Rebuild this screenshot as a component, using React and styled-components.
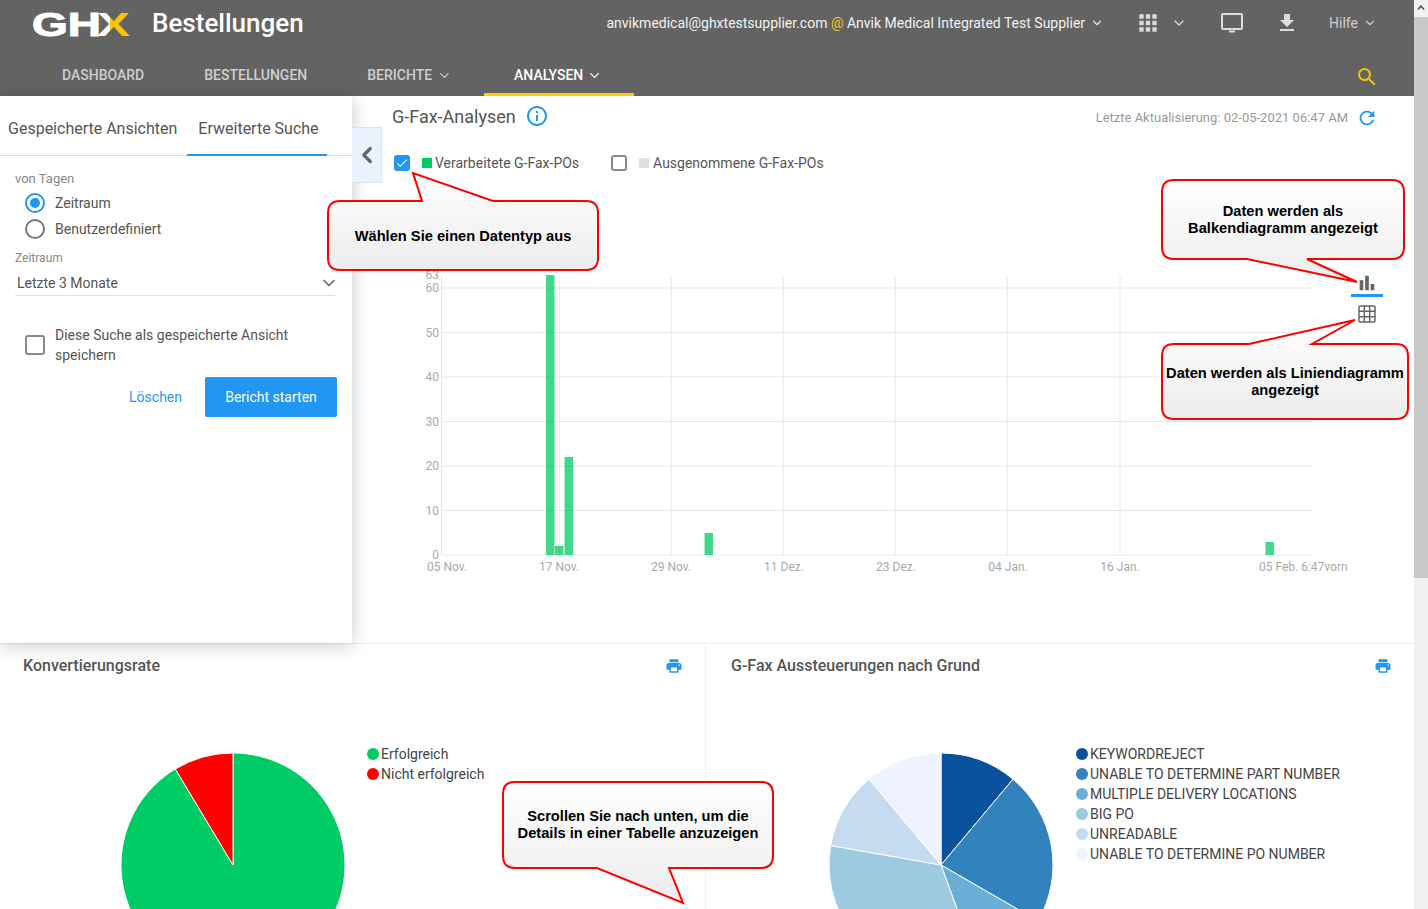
import React from "react";
import styled, { createGlobalStyle } from "styled-components";
import { ChevronDown, ChevronLeft } from "lucide-react";
import { MdApps, MdBarChart, MdFileDownload, MdInfoOutline, MdPrint, MdRefresh, MdSearch, MdCheck } from "react-icons/md";

const Global = createGlobalStyle`
  html, body { margin: 0; padding: 0; height: 909px; overflow: hidden; background: #fff; }
  body { font-family: Roboto, "Liberation Sans", sans-serif; color: #444; }
  * { box-sizing: border-box; }
`;

const Page = styled.div`
  position: relative;
  display: flex;
  width: 1428px;
  height: 909px;
  overflow: hidden;
`;
const Main = styled.div`
  width: 1414px;
  display: flex;
  flex-direction: column;
  flex: none;
`;
const Scrollbar = styled.div`
  width: 14px;
  background: #f1f1f1;
  display: flex;
  flex-direction: column;
  align-items: stretch;
`;
const ScrollArrow = styled.div`
  height: 17px;
  display: flex;
  justify-content: center;
  padding-top: 5px;
`;
const ScrollThumb = styled.div`
  height: 561px;
  background: #c9c9c9;
`;

const Header = styled.header`
  background: #636363;
  height: 96px;
  flex: none;
`;
const TopRow = styled.div`
  height: 47px;
  display: flex;
  align-items: center;
  padding-left: 32px;
`;
const Logo = styled.svg`
  width: 100px;
  height: 44px;
  flex: none;
`;
const AppTitle = styled.div`
  margin: 0 0 2px 20px;
  font-size: 26px;
  font-weight: 500;
  color: #fff;
`;
const UserBlock = styled.div`
  margin: 0 0 2px auto;
  display: flex;
  align-items: center;
  font-size: 14px;
  color: #f2f2f2;
  white-space: pre;
`;
const At = styled.span`
  color: #f5c518;
`;
const Chev = styled(ChevronDown)`
  flex: none;
  color: ${p => p.$c || "#e8e8e8"};
  margin-left: ${p => p.$ml || 0}px;
  margin-right: ${p => p.$mr || 0}px;
`;
const IconBtn = styled.span`
  display: inline-flex;
  color: #dcdcdc;
  margin-left: ${p => p.$ml}px;
`;
const Help = styled.span`
  margin-left: 30px;
  font-size: 14px;
  color: #cfcfcf;
`;
const TopIcons = styled.div`
  display: flex;
  align-items: center;
  margin: 0 37px 2px 0;
`;
const NavRow = styled.nav`
  height: 49px;
  display: flex;
  align-items: stretch;
  padding: 0 35px 0 32px;
`;
const NavItem = styled.div`
  display: flex;
  align-items: center;
  padding: 10px 30px 0;
  font-size: 14px;
  font-weight: 500;
  color: ${p => (p.$active ? "#fff" : "#cfcfcf")};
  border-bottom: 3px solid ${p => (p.$active ? "#fdcf00" : "transparent")};
`;
const NavSearch = styled.div`
  margin-left: auto;
  display: flex;
  align-items: center;
  padding-top: 10px;
  color: #f7c600;
`;

const Upper = styled.div`
  height: 547px;
  display: flex;
  flex: none;
`;
const Sidebar = styled.aside`
  position: relative;
  z-index: 2;
  width: 352px;
  flex: none;
  background: #fff;
  box-shadow: 0 2px 18px rgba(0, 0, 0, 0.22);
`;
const Collapse = styled.div`
  position: absolute;
  left: 352px;
  top: 31px;
  width: 30px;
  height: 56px;
  background: #e9f3fd;
  border: 1px solid #dfe3e6;
  border-left: none;
  display: flex;
  align-items: center;
  justify-content: center;
  color: #666;
`;
const Tabs = styled.div`
  height: 60px;
  border-bottom: 1px solid #ddd;
  display: flex;
  padding-left: 8px;
`;
const Tab = styled.div`
  height: 60px;
  display: flex;
  align-items: center;
  font-size: 16px;
  color: #555;
  padding: ${p => (p.$active ? "6px 8px 0 11px" : "4px 10px 0 0")};
  border-bottom: ${p => (p.$active ? "2px solid #2196f3" : "none")};
`;
const SideBody = styled.div`
  padding: 15px 15px 0;
  display: flex;
  flex-direction: column;
`;
const SmallLabel = styled.div`
  font-size: ${p => p.$s}px;
  color: #888;
  line-height: 16px;
  margin: ${p => p.$mt || 0}px 0 ${p => p.$mb || 0}px;
`;
const RadioRow = styled.div`
  display: flex;
  align-items: center;
  height: 26px;
  padding-left: 10px;
  font-size: 14px;
  color: #555;
  gap: 10px;
`;
const Radio = styled.span`
  width: 20px;
  height: 20px;
  border-radius: 50%;
  flex: none;
  border: 2px solid ${p => (p.$on ? "#2196f3" : "#777")};
  display: flex;
  align-items: center;
  justify-content: center;
  &::after {
    content: "";
    width: 10px;
    height: 10px;
    border-radius: 50%;
    background: ${p => (p.$on ? "#2196f3" : "transparent")};
  }
`;
const SelectBox = styled.div`
  height: 30px;
  margin-right: 2px;
  border-bottom: 1px solid #ddd;
  display: flex;
  align-items: center;
  justify-content: space-between;
  padding: 5px 0 0 2px;
  font-size: 14px;
  color: #555;
`;
const SaveRow = styled.div`
  display: flex;
  align-items: center;
  gap: 10px;
  padding-left: 10px;
  margin-top: 29px;
  font-size: 14px;
  line-height: 20px;
  color: #555;
`;
const Box = styled.span`
  flex: none;
  width: ${p => p.$s}px;
  height: ${p => p.$s}px;
  border-radius: 3px;
  border: 2px solid #8a8a8a;
`;
const Actions = styled.div`
  display: flex;
  justify-content: flex-end;
  align-items: center;
  gap: 23px;
  margin-top: 12px;
`;
const LinkBtn = styled.span`
  font-size: 14px;
  color: #2f96ee;
`;
const PrimaryBtn = styled.span`
  width: 132px;
  height: 40px;
  border-radius: 2px;
  background: #2196f3;
  color: #fff;
  font-size: 14px;
  display: flex;
  align-items: center;
  justify-content: center;
`;

const Analysis = styled.section`
  flex: 1;
  padding: 0 38px 0 40px;
  display: flex;
  flex-direction: column;
`;
const TitleRow = styled.div`
  height: 40px;
  display: flex;
  align-items: center;
`;
const Title = styled.h1`
  margin: 0 9px 0 0;
  font-size: 18px;
  font-weight: 400;
  color: #555;
`;
const Info = styled(MdInfoOutline)`
  color: #2196f3;
`;
const Updated = styled.div`
  margin: 3px 5px 0 auto;
  font-size: 13px;
  color: #999;
  display: flex;
  align-items: center;
  gap: 8px;
`;
const RefreshIcon = styled(MdRefresh)`
  color: #2196f3;
`;
const LegendRow = styled.div`
  margin-top: 15px;
  height: 24px;
  display: flex;
  align-items: center;
  padding-left: 2px;
  font-size: 14px;
  color: #555;
`;
const CheckedBox = styled.span`
  width: 16px;
  height: 16px;
  border-radius: 3px;
  background: #2196f3;
  color: #fff;
  display: flex;
  align-items: center;
  justify-content: center;
  flex: none;
`;
const Swatch = styled.span`
  width: 10px;
  height: 10px;
  background: ${p => p.$c};
  margin: 0 ${p => p.$gap}px 0 12px;
  flex: none;
`;
const SeriesGap = styled.span`
  width: 32px;
  flex: none;
`;
const ChartRow = styled.div`
  display: flex;
  margin-top: 87px;
`;
const ChartSvg = styled.svg`
  width: 959px;
  height: 318px;
  flex: none;
`;
const ViewSwitch = styled.div`
  width: 32px;
  margin-top: 10px;
  display: flex;
  flex-direction: column;
  align-items: center;
  color: #666;
`;
const BarBtn = styled.div`
  width: 32px;
  height: 25px;
  border-bottom: 3px solid #2196f3;
  display: flex;
  justify-content: center;
`;
const TableBtn = styled.svg`
  margin-top: 8px;
`;

const Lower = styled.div`
  flex: 1;
  display: flex;
  border-top: 1px solid #eee;
  min-height: 0;
`;
const Panel = styled.section`
  flex: ${p => p.$w}px 0 0;
  border-left: ${p => (p.$div ? "1px solid #eee" : "none")};
  padding: 12px 22px 0 ${p => p.$pl}px;
  display: flex;
  flex-direction: column;
  min-width: 0;
`;
const PanelHead = styled.div`
  display: flex;
  align-items: center;
  justify-content: space-between;
  height: 20px;
`;
const PanelTitle = styled.h2`
  margin: 0;
  font-size: 16px;
  font-weight: 500;
  color: #555;
`;
const PrintIcon = styled(MdPrint)`
  color: #2196f3;
`;
const PanelBody = styled.div`
  display: flex;
  align-items: flex-start;
  padding: 77px 0 0 ${p => p.$pl}px;
`;
const PieSvg = styled.svg`
  width: 226px;
  height: 226px;
  flex: none;
`;
const PieLegend = styled.ul`
  list-style: none;
  margin: -8px 0 0 ${p => p.$ml}px;
  padding: 0;
`;
const PieLegendItem = styled.li`
  display: flex;
  align-items: center;
  height: 20px;
  font-size: 14px;
  color: #444;
  gap: 2px;
  white-space: nowrap;
`;
const Dot = styled.span`
  width: 12px;
  height: 12px;
  border-radius: 50%;
  background: ${p => p.$c};
  flex: none;
`;

const CalloutWrap = styled.div`
  position: absolute;
  z-index: 5;
  left: ${p => p.$x}px;
  top: ${p => p.$y}px;
  width: ${p => p.$w}px;
  height: ${p => p.$h}px;
  padding-top: ${p => p.$dy || 0}px;
  display: flex;
  align-items: center;
  justify-content: center;
  text-align: center;
  font-family: "Liberation Sans", Arial, sans-serif;
  font-size: 14.67px;
  line-height: 17px;
  font-weight: 700;
  color: #000;
`;
const CalloutShape = styled.svg`
  position: absolute;
  left: 0;
  top: 0;
  overflow: visible;
  pointer-events: none;
`;
const CalloutText = styled.div`
  position: relative;
  white-space: pre-line;
`;

function Callout({ x, y, w, h, tail, side, id, dy, children }) {
  const r = 12;
  const [a, tip, b] = tail;
  const tx = (p) => p[0] - x;
  const ty = (p) => p[1] - y;
  const top = side === "top"
    ? `L${tx(a)} 0 L${tx(tip)} ${ty(tip)} L${tx(b)} 0 `
    : "";
  const bottom = side === "bottom"
    ? `L${tx(b)} ${h} L${tx(tip)} ${ty(tip)} L${tx(a)} ${h} `
    : "";
  const d = `M${r} 0 ${top}L${w - r} 0 Q${w} 0 ${w} ${r} L${w} ${h - r} Q${w} ${h} ${w - r} ${h} ${bottom}L${r} ${h} Q0 ${h} 0 ${h - r} L0 ${r} Q0 0 ${r} 0 Z`;
  return (
    <CalloutWrap $x={x} $y={y} $w={w} $h={h} $dy={dy}>
      <CalloutShape width={w} height={h}>
        <defs>
          <linearGradient id={id} x1="0" y1="0" x2="0" y2="1">
            <stop offset="0" stopColor="#ffffff" />
            <stop offset="1" stopColor="#ececec" />
          </linearGradient>
        </defs>
        <path d={d} fill={`url(#${id})`} stroke="#f00" strokeWidth="2" strokeLinejoin="miter" />
      </CalloutShape>
      <CalloutText>{children}</CalloutText>
    </CalloutWrap>
  );
}

function slice(cx, cy, r, from, to) {
  const pt = (deg) => {
    const t = ((deg - 90) * Math.PI) / 180;
    return [cx + r * Math.cos(t), cy + r * Math.sin(t)];
  };
  const [x1, y1] = pt(from);
  const [x2, y2] = pt(to);
  return `M${cx} ${cy} L${x1} ${y1} A${r} ${r} 0 ${to - from > 180 ? 1 : 0} 1 ${x2} ${y2} Z`;
}

function Pie({ slices }) {
  return (
    <PieSvg viewBox="0 0 226 226">
      {slices.map((s) => (
        <path key={s.c} d={slice(113, 113, 112, s.from, s.to)} fill={s.c} stroke="#fff" strokeWidth="1" />
      ))}
    </PieSvg>
  );
}

const yTicks = [[60, 288], [50, 332.5], [40, 377], [30, 421.5], [20, 466], [10, 510.5], [0, 555]];
const xTicks = [["05 Nov.", 447, 447], ["17 Nov.", 559, 559], ["29 Nov.", 671, 671], ["11 Dez.", 783, 784], ["23 Dez.", 895, 896], ["04 Jan.", 1007, 1008], ["16 Jan.", 1120, 1120]];
const bars = [[546, 275, 8.5], [555, 546, 8.5], [564.5, 457, 8.5], [704.5, 533, 8.5], [1265.5, 542, 8.5]];

function Chart() {
  return (
    <ChartSvg viewBox="392 262 959 318" fontFamily="Roboto, sans-serif" fontSize="12" fill="#a9a9a9">
      <line x1="441.5" y1="275" x2="441.5" y2="555" stroke="#e6e6e6" />
      {xTicks.slice(1).map(([t, x]) => (
        <line key={t} x1={x} y1="275" x2={x} y2="555" stroke="#e6e6e6" />
      ))}
      {yTicks.map(([v, y]) => (
        <line key={v} x1="441" y1={y} x2="1312" y2={y} stroke="#e6e6e6" />
      ))}
      {bars.map(([x, y, w]) => (
        <rect key={x} x={x} y={y} width={w} height={555 - y} fill="#00cc66" fillOpacity="0.75" />
      ))}
      <text x="439" y="279" textAnchor="end">63</text>
      {yTicks.map(([v, y]) => (
        <text key={v} x="439" y={y + 4} textAnchor="end">{v}</text>
      ))}
      {xTicks.map(([t, , lx]) => (
        <text key={t} x={lx} y="571" textAnchor="middle">{t}</text>
      ))}
      <text x="1259" y="571">05 Feb. 6:47vorn</text>
    </ChartSvg>
  );
}

const conv = [
  { c: "#00cc66", from: 0, to: 329 },
  { c: "#ff0000", from: 329, to: 360 },
];
const reasons = [
  { c: "#08519c", from: 0, to: 40, label: "KEYWORDREJECT" },
  { c: "#3182bd", from: 40, to: 120, label: "UNABLE TO DETERMINE PART NUMBER" },
  { c: "#6baed6", from: 120, to: 160, label: "MULTIPLE DELIVERY LOCATIONS" },
  { c: "#9ecae1", from: 160, to: 280, label: "BIG PO" },
  { c: "#c6dbef", from: 280, to: 320, label: "UNREADABLE" },
  { c: "#eff3ff", from: 320, to: 360, label: "UNABLE TO DETERMINE PO NUMBER" },
];

export default function App() {
  return (
    <Page>
      <Global />
      <Main>
        <Header>
          <TopRow>
            <Logo viewBox="0 0 100 44">
              <defs>
                <linearGradient id="gx" x1="0" y1="0" x2="1" y2="0">
                  <stop offset="0.38" stopColor="#fff" />
                  <stop offset="0.38" stopColor="#f7c600" />
                </linearGradient>
              </defs>
              <text x="0" y="34" fontFamily="Liberation Sans, sans-serif" fontWeight="700" fontSize="34" fill="#fff" stroke="#fff" strokeWidth="1" textLength="69" lengthAdjust="spacingAndGlyphs">GH</text>
              <text x="65" y="34" fontFamily="Liberation Sans, sans-serif" fontWeight="700" fontSize="34" fill="url(#gx)" textLength="33" lengthAdjust="spacingAndGlyphs">X</text>
            </Logo>
            <AppTitle>Bestellungen</AppTitle>
            <UserBlock>
              anvikmedical@ghxtestsupplier.com <At>@</At> Anvik Medical Integrated Test Supplier
              <Chev size={14} $ml={5} />
            </UserBlock>
            <TopIcons>
              <IconBtn $ml={31}><MdApps size={26} /></IconBtn>
              <Chev size={16} $ml={10} $c="#dcdcdc" />
              <IconBtn $ml={32}>
                <svg width="26" height="24" viewBox="0 0 26 24" fill="none" stroke="#dcdcdc" strokeWidth="2">
                  <rect x="3" y="3" width="20" height="15" rx="1" />
                  <path d="M10 20.5h6" />
                </svg>
              </IconBtn>
              <IconBtn $ml={30}><MdFileDownload size={24} /></IconBtn>
              <Help>Hilfe</Help>
              <Chev size={14} $ml={5} $c="#cfcfcf" />
            </TopIcons>
          </TopRow>
          <NavRow>
            <NavItem>DASHBOARD</NavItem>
            <NavItem>BESTELLUNGEN</NavItem>
            <NavItem>BERICHTE<Chev size={15} $ml={5} $mr={2} $c="#cfcfcf" /></NavItem>
            <NavItem $active>ANALYSEN<Chev size={15} $ml={4} $mr={2} $c="#fff" /></NavItem>
            <NavSearch><MdSearch size={24} /></NavSearch>
          </NavRow>
        </Header>

        <Upper>
          <Sidebar>
            <Collapse><ChevronLeft size={26} strokeWidth={3} /></Collapse>
            <Tabs>
              <Tab>Gespeicherte Ansichten</Tab>
              <Tab $active>Erweiterte Suche</Tab>
            </Tabs>
            <SideBody>
              <SmallLabel $s={13} $mb={3}>von Tagen</SmallLabel>
              <RadioRow><Radio $on />Zeitraum</RadioRow>
              <RadioRow><Radio />Benutzerdefiniert</RadioRow>
              <SmallLabel $s={12} $mt={8}>Zeitraum</SmallLabel>
              <SelectBox>Letzte 3 Monate<Chev size={20} $c="#666" $mr={-4} /></SelectBox>
              <SaveRow>
                <Box $s={20} />
                <span>Diese Suche als gespeicherte Ansicht speichern</span>
              </SaveRow>
              <Actions>
                <LinkBtn>Löschen</LinkBtn>
                <PrimaryBtn>Bericht starten</PrimaryBtn>
              </Actions>
            </SideBody>
          </Sidebar>
          <Analysis>
            <TitleRow>
              <Title>G-Fax-Analysen</Title>
              <Info size={24} />
              <Updated>Letzte Aktualisierung: 02-05-2021 06:47 AM<RefreshIcon size={22} /></Updated>
            </TitleRow>
            <LegendRow>
              <CheckedBox><MdCheck size={14} /></CheckedBox>
              <Swatch $c="#00cc66" $gap={3} />Verarbeitete G-Fax-POs
              <SeriesGap />
              <Box $s={16} />
              <Swatch $c="#e0e0e0" $gap={4} />Ausgenommene G-Fax-POs
            </LegendRow>
            <ChartRow>
              <Chart />
              <ViewSwitch>
                <BarBtn><MdBarChart size={22} /></BarBtn>
                <TableBtn width="18" height="18" viewBox="0 0 18 18" fill="none" stroke="#666" strokeWidth="1.5">
                  <rect x="1" y="1" width="16" height="16" rx="1" />
                  <path d="M6.3 1v16M11.7 1v16M1 6.3h16M1 11.7h16" />
                </TableBtn>
              </ViewSwitch>
            </ChartRow>
          </Analysis>
        </Upper>

        <Lower>
          <Panel $w={705} $pl={23}>
            <PanelHead>
              <PanelTitle>Konvertierungsrate</PanelTitle>
              <PrintIcon size={18} />
            </PanelHead>
            <PanelBody $pl={97}>
              <Pie slices={conv} />
              <PieLegend $ml={21}>
                <PieLegendItem><Dot $c="#00cc66" />Erfolgreich</PieLegendItem>
                <PieLegendItem><Dot $c="#ff0000" />Nicht erfolgreich</PieLegendItem>
              </PieLegend>
            </PanelBody>
          </Panel>
          <Panel $w={709} $div $pl={25}>
            <PanelHead>
              <PanelTitle>G-Fax Aussteuerungen nach Grund</PanelTitle>
              <PrintIcon size={18} />
            </PanelHead>
            <PanelBody $pl={97}>
              <Pie slices={reasons} />
              <PieLegend $ml={22}>
                {reasons.map((r) => (
                  <PieLegendItem key={r.c}><Dot $c={r.c} />{r.label}</PieLegendItem>
                ))}
              </PieLegend>
            </PanelBody>
          </Panel>
        </Lower>
      </Main>
      <Scrollbar>
        <ScrollArrow>
          <svg width="8" height="5" viewBox="0 0 8 5" fill="none" stroke="#505050" strokeWidth="1.5"><path d="M1 4.5L4 1l3 3.5" /></svg>
        </ScrollArrow>
        <ScrollThumb />
      </Scrollbar>

      <Callout id="c1" x={328} y={201} w={270} h={69} dy={2} side="top" tail={[[422, 201], [413, 173], [493, 201]]}>
        Wählen Sie einen Datentyp aus
      </Callout>
      <Callout id="c2" x={1162} y={180} w={242} h={79} side="bottom" tail={[[1247, 259], [1357, 282], [1307, 259]]}>
        {"Daten werden als\nBalkendiagramm angezeigt"}
      </Callout>
      <Callout id="c3" x={1162} y={344} w={246} h={75} side="top" tail={[[1249, 344], [1355, 320], [1312, 344]]}>
        {"Daten werden als Liniendiagramm\nangezeigt"}
      </Callout>
      <Callout id="c4" x={503} y={782} w={270} h={86} side="bottom" tail={[[597, 868], [683, 903], [669, 868]]}>
        {"Scrollen Sie nach unten, um die\nDetails in einer Tabelle anzuzeigen"}
      </Callout>
    </Page>
  );
}
